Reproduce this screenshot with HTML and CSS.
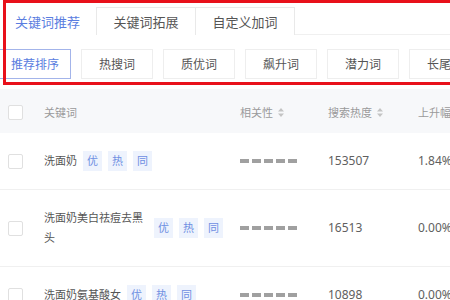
FILE: index.html
```html
<!DOCTYPE html>
<html lang="zh">
<head>
<meta charset="utf-8">
<link rel="stylesheet" href="styles.css">
</head>
<body>
<div class="page">
  <div class="tabs">
    <div class="tab active">关键词推荐</div>
    <div class="tab">关键词拓展</div>
    <div class="tab">自定义加词</div>
  </div>
  <div class="filters">
    <div class="btn active">推荐排序</div>
    <div class="btn">热搜词</div>
    <div class="btn">质优词</div>
    <div class="btn">飙升词</div>
    <div class="btn">潜力词</div>
    <div class="btn">长尾词</div>
  </div>
  <div class="table">
    <div class="row head">
      <div class="cell chk"><span class="box"></span></div>
      <div class="cell">关键词</div>
      <div class="cell">相关性 <svg class="sort" width="6" height="9" viewBox="0 0 6 9"><path d="M3 0L6 3.5H0Z M3 9L0 5.5H6Z" fill="#c4c4c4"/></svg></div>
      <div class="cell">搜索热度 <svg class="sort" width="6" height="9" viewBox="0 0 6 9"><path d="M3 0L6 3.5H0Z M3 9L0 5.5H6Z" fill="#c4c4c4"/></svg></div>
      <div class="cell clip">上升幅度</div>
    </div>
    <div class="row">
      <div class="cell chk"><span class="box"></span></div>
      <div class="cell kw"><span class="word">洗面奶</span><span class="tags"><i>优</i><i>热</i><i>同</i></span></div>
      <div class="cell"><span class="bars"><b></b><b></b><b></b><b></b><b></b></span></div>
      <div class="cell num">153507</div>
      <div class="cell num">1.84%</div>
    </div>
    <div class="row">
      <div class="cell chk"><span class="box"></span></div>
      <div class="cell kw"><span class="word">洗面奶美白祛痘去黑头</span><span class="tags"><i>优</i><i>热</i><i>同</i></span></div>
      <div class="cell"><span class="bars"><b></b><b></b><b></b><b></b><b></b></span></div>
      <div class="cell num">16513</div>
      <div class="cell num">0.00%</div>
    </div>
    <div class="row">
      <div class="cell chk"><span class="box"></span></div>
      <div class="cell kw"><span class="word">洗面奶氨基酸女</span><span class="tags"><i>优</i><i>热</i><i>同</i></span></div>
      <div class="cell"><span class="bars"><b></b><b></b><b></b><b></b><b></b></span></div>
      <div class="cell num">10898</div>
      <div class="cell num">0.00%</div>
    </div>
  </div>
  <div class="mark"></div>
</div>
</body>
</html>
```

FILE: styles.css
```css
* { box-sizing: border-box; }
html, body { margin: 0; padding: 0; background: #fff; overflow: hidden; }
body {
  width: 450px; height: 300px;
  font-family: "Noto Sans", "Noto Sans CJK SC", sans-serif;
  color: #555;
}
.page { position: relative; width: 450px; height: 300px; overflow: hidden; padding-top: 7px; }

.tabs { display: flex; margin-left: -2px; height: 28px; border-bottom: 1px solid #f0f0f0; }
.tab {
  width: 100px; height: 28px; margin-right: -1px;
  display: flex; align-items: center; justify-content: center;
  font-size: 13px; color: #555;
  border: 1px solid #e9e9e9; border-bottom: none; background: #fff;
}
.tab.active { color: #5a7de0; border-color: transparent; width: 99px; }

.filters { display: flex; gap: 10px; margin-top: 14px; margin-left: -1px; }
.btn {
  flex: 0 0 72px; height: 30px;
  display: flex; align-items: center; justify-content: center;
  font-size: 12px; color: #555;
  border: 1px solid #eeeeee; background: #fff;
}
.btn.active { color: #5a7de0; border-color: #a3b4ea; }

.table { margin-top: 10px; font-size: 11px; }
.row {
  display: grid;
  grid-template-columns: 44px 196px 88px 90px 1fr;
  border-bottom: 1px solid #f0f0f0;
  padding: 18px 0;
  align-items: center;
}
.row.head { background: #f7f8fa; border-bottom: none; height: 44px; padding: 3px 0 0; color: #9a9a9a; }
.cell { display: flex; align-items: center; white-space: nowrap; line-height: 20px; }
.cell.clip { overflow: hidden; }
.chk { padding-left: 8px; }
.box { width: 15px; height: 15px; border: 1px solid #e0e0e0; border-radius: 2px; background: #fff; }
.sort { margin-left: 5px; }

.kw { color: #555; gap: 6px; }
.word { white-space: normal; max-width: 104px; line-height: 20px; }
.tags { display: flex; gap: 6px; flex: none; }
.tags i {
  font-style: normal; font-size: 11px; color: #6f8fe2;
  background: #eef3fd; height: 20px; padding: 0 4px;
  display: flex; align-items: center;
}

.bars { display: flex; gap: 3px; }
.bars b { width: 9px; height: 4px; background: #a0a0a0; }
.num { font-size: 12px; color: #606060; }

.mark {
  position: absolute; left: 3px; top: 0; width: 470px; height: 85px;
  border: 3px solid #e8101a; pointer-events: none;
}
```
